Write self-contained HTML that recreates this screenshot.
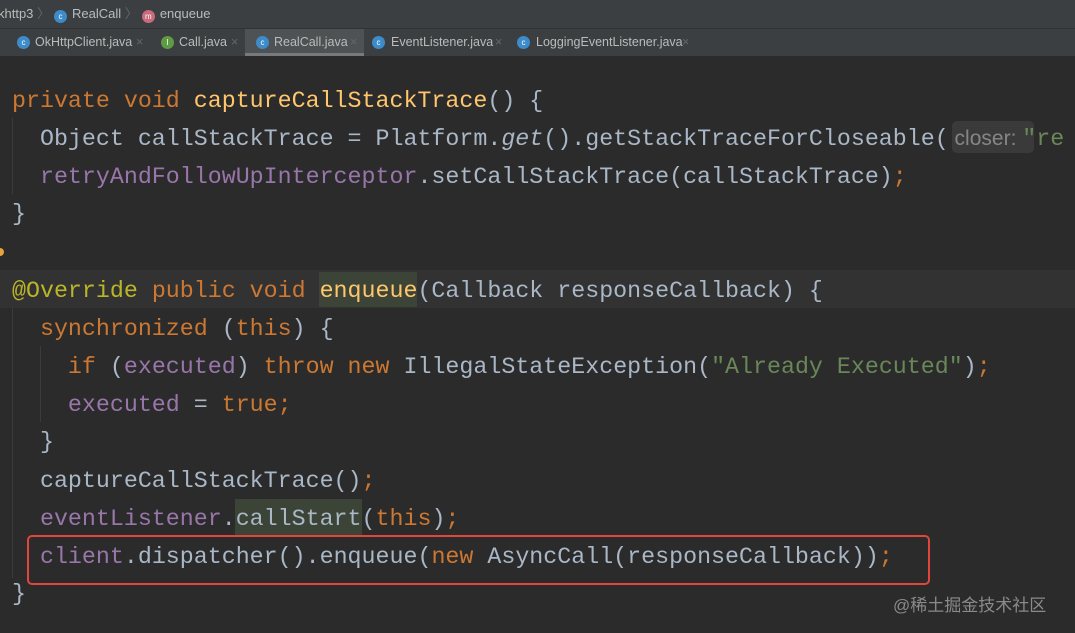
<!DOCTYPE html>
<html><head><meta charset="utf-8"><style>
body{margin:0;width:1075px;height:633px;background:#2b2b2b;overflow:hidden;position:relative;font-family:"Liberation Sans",sans-serif}
.bc{position:absolute;left:0;top:0;width:1075px;height:28px;background:#3c3f41;color:#bbbbbb;font-size:13px;line-height:28px;border-bottom:1px solid #323232}
.tabs{position:absolute;left:0;top:29px;width:1075px;height:27px;background:#3c3f41;color:#bbbbbb;font-size:12.5px;line-height:26px;border-bottom:1px solid #2b2b2b}
.t{position:absolute;top:0;white-space:nowrap}
.ic{display:inline-block;width:13px;height:13px;border-radius:50%;background:#3d8bc9;color:#fff;font-size:8px;line-height:13px;text-align:center;vertical-align:-1px}
.ti{position:absolute;top:7px}
.x{position:absolute;top:0;color:#666}
.code{position:absolute;left:0;font-family:"Liberation Mono",monospace;font-size:23.3px;color:#a9b7c6;white-space:pre;line-height:38px;height:38px}
.k{color:#cc7832}.m{color:#ffc66d}.f{color:#9876aa}.s{color:#6a8759}.a{color:#bbb529}
.g{position:absolute;top:80px;width:1px;background:#3b3b3b}
</style></head><body>
<div class="bc"><span style="margin-left:-2px">khttp3</span><span style="color:#666"> 〉</span><span class="ic" style="margin-left:4px;margin-right:5px">c</span>RealCall<span style="color:#666"> 〉</span><span class="ic" style="background:#c96a7d;margin-left:4px;margin-right:5px">m</span>enqueue</div>
<div class="tabs">
<div style="position:absolute;left:245px;top:0;width:119px;height:24px;background:#4e5254;border-bottom:3px solid #747a80"></div>
<span class="ic ti" style="left:17px">c</span><span class="t" style="left:35px">OkHttpClient.java</span><span class="x" style="left:136px">×</span>
<span class="ic ti" style="left:161px;background:#5f9b45">I</span><span class="t" style="left:179px">Call.java</span><span class="x" style="left:231px">×</span>
<span class="ic ti" style="left:256px">c</span><span class="t" style="left:274px">RealCall.java</span><span class="x" style="left:350px">×</span>
<span class="ic ti" style="left:372px">c</span><span class="t" style="left:391px">EventListener.java</span><span class="x" style="left:495px">×</span>
<span class="ic ti" style="left:517px">c</span><span class="t" style="left:536px">LoggingEventListener.java</span><span class="x" style="left:682px">×</span>
</div>
<div style="position:absolute;left:0;top:270px;width:1075px;height:38px;background:#323232"></div>
<div style="position:absolute;left:319px;top:272px;width:98px;height:35px;background:#3b4436"></div>
<div style="position:absolute;left:235px;top:499px;width:127px;height:36px;background:#3b4436"></div>
<div style="position:absolute;left:952px;top:121px;width:82px;height:32px;background:#3a3a3a;border-radius:5px"></div>
<div style="position:absolute;left:-4px;top:248px;width:8px;height:8px;border-radius:50%;background:#e8a33d"></div>
<div class="g" style="left:12px;top:118px;height:76px"></div>
<div class="g" style="left:12px;top:308px;height:270px"></div>
<div class="g" style="left:40px;top:346px;height:76px"></div>
<div class="code" style="top:82px;left:12px"><span class="k">private void </span><span class="m">captureCallStackTrace</span>() {</div>
<div class="code" style="top:120px;left:12px">  Object callStackTrace = Platform.<i>get</i>().getStackTraceForCloseable(<span style="font-family:'Liberation Sans',sans-serif;color:#868686;font-size:21px"> closer: </span><span class="s">"re</span></div>
<div class="code" style="top:158px;left:12px">  <span class="f">retryAndFollowUpInterceptor</span>.setCallStackTrace(callStackTrace)<span class="k">;</span></div>
<div class="code" style="top:195px;left:12px">}</div>
<div class="code" style="top:272px;left:12px"><span class="a">@Override </span><span class="k">public void </span><span class="m">enqueue</span>(Callback responseCallback) {</div>
<div class="code" style="top:310px;left:12px">  <span class="k">synchronized </span>(<span class="k">this</span>) {</div>
<div class="code" style="top:348px;left:12px">    <span class="k">if </span>(<span class="f">executed</span>) <span class="k">throw new </span>IllegalStateException(<span class="s">"Already Executed"</span>)<span class="k">;</span></div>
<div class="code" style="top:386px;left:12px">    <span class="f">executed </span>= <span class="k">true;</span></div>
<div class="code" style="top:423px;left:12px">  }</div>
<div class="code" style="top:462px;left:12px">  captureCallStackTrace()<span class="k">;</span></div>
<div class="code" style="top:500px;left:12px">  <span class="f">eventListener</span>.callStart(<span class="k">this</span>)<span class="k">;</span></div>
<div class="code" style="top:538px;left:12px">  <span class="f">client</span>.dispatcher().enqueue(<span class="k">new </span>AsyncCall(responseCallback))<span class="k">;</span></div>
<div class="code" style="top:575px;left:12px">}</div>
<div style="position:absolute;left:27px;top:535px;width:899px;height:46px;border:2px solid #e0463a;border-radius:5px"></div>
<div style="position:absolute;left:893px;top:591px;color:#8a8a8a;font-size:17px;font-family:'Liberation Sans','Noto Sans CJK SC',sans-serif">@稀土掘金技术社区</div>
</body></html>
